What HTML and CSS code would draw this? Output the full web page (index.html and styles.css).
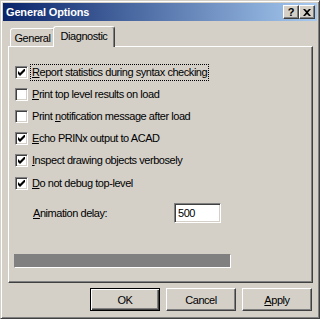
FILE: index.html
```html
<!DOCTYPE html>
<html lang="en">
<head>
    <meta charset="UTF-8">
    <title>General Options</title>
    <link rel="stylesheet" href="styles.css">
</head>
<body>
    <div class="window">
        <div class="titlebar">
            <span class="title">General Options</span>
            <div class="caption-buttons">
                <span class="cap-btn help">?</span>
                <span class="cap-btn">
                    <svg width="8" height="7" viewBox="0 0 8 7"><path d="M0,0h2l2,2l2,-2h2l-3,3.5l3,3.5h-2l-2,-2l-2,2h-2l3,-3.5z" fill="#000"/></svg>
                </span>
            </div>
        </div>
        <div class="content">
            <div class="tabs">
                <div class="tab">General</div>
                <div class="tab active">Diagnostic</div>
            </div>
            <div class="panel">
                <div class="options">
                    <div class="check">
                        <span class="box"><svg width="7" height="7" viewBox="0 0 7 7"><path d="M0,2l2,2l5,-5v3l-5,5l-2,-2z" fill="#000"/></svg></span>
                        <span class="label focus"><u>R</u>eport statistics during syntax checking</span>
                    </div>
                    <div class="check">
                        <span class="box"></span>
                        <span class="label"><u>P</u>rint top level results on load</span>
                    </div>
                    <div class="check">
                        <span class="box"></span>
                        <span class="label">Print <u>n</u>otification message after load</span>
                    </div>
                    <div class="check">
                        <span class="box"><svg width="7" height="7" viewBox="0 0 7 7"><path d="M0,2l2,2l5,-5v3l-5,5l-2,-2z" fill="#000"/></svg></span>
                        <span class="label"><u>E</u>cho PRINx output to ACAD</span>
                    </div>
                    <div class="check">
                        <span class="box"><svg width="7" height="7" viewBox="0 0 7 7"><path d="M0,2l2,2l5,-5v3l-5,5l-2,-2z" fill="#000"/></svg></span>
                        <span class="label"><u>I</u>nspect drawing objects verbosely</span>
                    </div>
                    <div class="check">
                        <span class="box"><svg width="7" height="7" viewBox="0 0 7 7"><path d="M0,2l2,2l5,-5v3l-5,5l-2,-2z" fill="#000"/></svg></span>
                        <span class="label"><u>D</u>o not debug top-level</span>
                    </div>
                </div>
                <div class="field">
                    <span class="field-label"><u>A</u>nimation delay:</span>
                    <span class="input">500</span>
                </div>
                <div class="progress"></div>
            </div>
            <div class="buttons">
                <div class="btn default">OK</div>
                <div class="btn">Cancel</div>
                <div class="btn"><u>A</u>pply</div>
            </div>
        </div>
    </div>
</body>
</html>
```

FILE: styles.css
```css
body {
    margin: 0;
    background: #d4d0c8;
    font-family: "Liberation Sans", Arial, sans-serif;
    font-size: 11px;
    letter-spacing: -0.45px;
    color: #000;
}
.window {
    width: 320px;
    height: 319px;
    box-sizing: border-box;
    border: 1px solid;
    border-color: #d4d0c8 #404040 #404040 #d4d0c8;
    box-shadow: inset 1px 1px #fff, inset -1px -1px #808080;
    padding: 2px;
    background: #d4d0c8;
}
.titlebar {
    height: 18px;
    display: flex;
    align-items: center;
    justify-content: space-between;
    padding: 0 2px 0 2px;
    background: linear-gradient(to right, #0a246a, #a6caf0);
}
.title {
    color: #fff;
    font-weight: bold;
    letter-spacing: -0.15px;
    padding-left: 1px;
}
.caption-buttons {
    display: flex;
}
.cap-btn {
    width: 16px;
    height: 14px;
    box-sizing: border-box;
    border: 1px solid;
    border-color: #fff #404040 #404040 #fff;
    box-shadow: inset -1px -1px #808080;
    background: #d4d0c8;
    display: flex;
    align-items: center;
    justify-content: center;
    font-weight: bold;
    font-size: 11px;
    letter-spacing: 0;
}
.content {
    padding: 5px 4px 0 5px;
}
.tabs {
    display: flex;
    align-items: flex-end;
    height: 20px;
    position: relative;
    z-index: 1;
}
.tab {
    height: 18px;
    box-sizing: border-box;
    border: 1px solid;
    border-bottom: none;
    border-color: #fff #404040 transparent #fff;
    border-radius: 3px 3px 0 0;
    box-shadow: inset -1px 0 #808080;
    display: flex;
    align-items: center;
    justify-content: center;
    background: #d4d0c8;
    margin-left: 2px;
    width: 45px;
    padding-top: 1px;
}
.tab.active {
    height: 21px;
    margin-bottom: -1px;
    margin-left: -2px;
    width: 62px;
    padding-top: 0;
    padding-bottom: 3px;
}
.panel {
    height: 237px;
    box-sizing: border-box;
    border: 1px solid;
    border-color: #fff #404040 #404040 #fff;
    box-shadow: inset -1px -1px #808080;
    padding: 14px 0 0 6px;
}
.options {
    display: flex;
    flex-direction: column;
}
.check {
    display: flex;
    align-items: center;
    height: 22.2px;
}
.box {
    width: 13px;
    height: 13px;
    box-sizing: border-box;
    border: 1px solid;
    border-color: #808080 #fff #fff #808080;
    box-shadow: inset 1px 1px #404040, inset -1px -1px #d4d0c8;
    background: #fff;
    display: flex;
    align-items: center;
    justify-content: center;
    flex-shrink: 0;
}
.box svg {
    display: block;
}
.label {
    margin-left: 2px;
    padding: 1px 1px 2px 1px;
    border: 1px dotted transparent;
    white-space: nowrap;
}
.label.focus {
    border-color: #000;
}
.field {
    display: flex;
    align-items: center;
    margin-top: 9px;
    padding-left: 18px;
}
.field-label {
    width: 141px;
}
.input {
    width: 47px;
    height: 20px;
    box-sizing: border-box;
    border: 1px solid;
    border-color: #808080 #fff #fff #808080;
    box-shadow: inset 1px 1px #404040, inset -1px -1px #d4d0c8;
    background: #fff;
    padding: 3px 0 0 3px;
}
.progress {
    margin-top: 31px;
    margin-left: -1px;
    width: 217px;
    height: 14px;
    box-sizing: border-box;
    border: 1px solid;
    border-color: #808080 #fff #fff #808080;
    background: #808080;
}
.buttons {
    display: flex;
    justify-content: flex-end;
    gap: 6px;
    margin-top: 5px;
    padding-right: 1px;
}
.btn {
    width: 70px;
    height: 23px;
    box-sizing: border-box;
    border: 1px solid;
    border-color: #fff #404040 #404040 #fff;
    box-shadow: inset -1px -1px #808080;
    display: flex;
    align-items: center;
    justify-content: center;
}
.btn.default {
    border-color: #000;
    box-shadow: inset 1px 1px #fff, inset -1px -1px #404040, inset -2px -2px #808080;
}
```
